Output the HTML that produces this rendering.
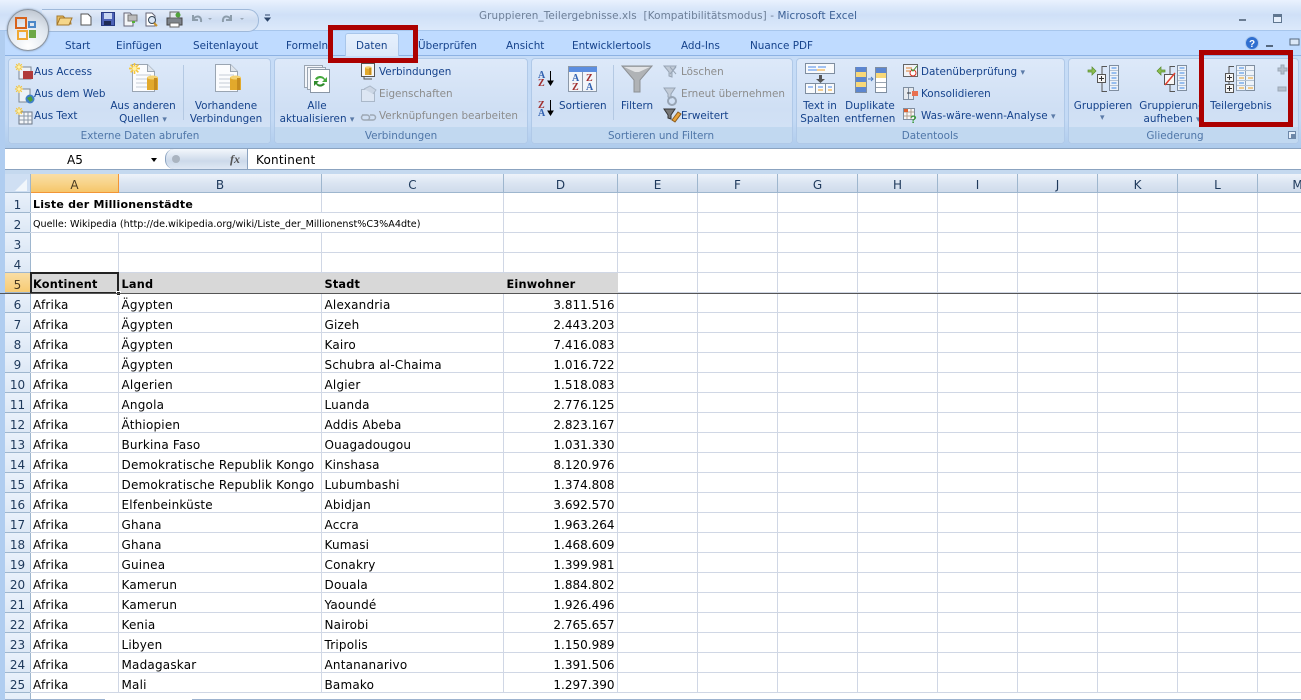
<!DOCTYPE html>
<html><head><meta charset="utf-8"><style>
html,body{margin:0;padding:0;width:1301px;height:700px;overflow:hidden;background:#fff}
body{position:relative;font-family:"DejaVu Sans","Liberation Sans",sans-serif}
.a{position:absolute}
.t{position:absolute;white-space:nowrap;font-size:10.4px;line-height:13px;color:#15428b}
.c{text-align:center;transform:translateX(-50%)}
.g{color:#8c8c8c}
.d{font-size:9px;color:#5b7ba8}
.tab{position:absolute;top:39px;white-space:nowrap;font-size:10.4px;line-height:14px;color:#15428b}
.grp{position:absolute;top:58px;height:84px;border:1px solid #b0c9e8;border-radius:4px;background:linear-gradient(#dde9f9,#cfdff4 60%,#d4e3f6 82px);overflow:hidden;box-sizing:content-box}
.grp i{position:absolute;left:0;right:0;bottom:0;height:16px;background:#c1d8f0;display:block}
.lab{position:absolute;top:130px;white-space:nowrap;font-size:10.4px;line-height:13px;color:#4f76a8;transform:translateX(-50%)}
.red{position:absolute;border:5px solid #ac0000;box-sizing:border-box}
table{position:absolute;left:30px;top:193px;border-collapse:collapse;table-layout:fixed;width:1307px;font-size:12px;letter-spacing:.2px;color:#000}
td{height:14px;padding:5px 2px 0 3px;border-right:1px solid #d0d7e5;border-bottom:1px solid #d0d7e5;white-space:nowrap;overflow:hidden;line-height:14px;box-sizing:content-box}
td.n{text-align:right;padding-right:2px;letter-spacing:0}
tr.h td{background:#d8d8d8;font-weight:bold;font-size:11.3px;border-right-color:#d8d8d8;border-bottom-color:#d8d8d8}
tr.h td.e{background:#fff;border-right-color:#d0d7e5;border-bottom-color:#d0d7e5}
.rh{position:absolute;left:5px;width:25px;height:19px;border-bottom:1px solid #9eb6ce;border-right:1px solid #9eb6ce;background:linear-gradient(#e9f1fb,#dde8f5);font-size:12px;line-height:24px;overflow:hidden;text-align:center;color:#1e395b}
.ch{position:absolute;top:174px;height:18px;border-right:1px solid #9eb6ce;border-bottom:1px solid #9eb6ce;background:linear-gradient(#eef3fa,#dbe5f2 50%,#cfdbeb);font-size:12px;line-height:22px;text-align:center;color:#1e395b}
</style></head><body>
<!-- frame -->
<div class="a" style="left:0;top:0;width:1301px;height:30px;background:linear-gradient(#eaf2fe,#dbe8fa 25%,#cfe0f7 50%,#dce9fb)"></div>
<div class="a" style="left:0;top:30px;width:1301px;height:1px;background:#a7c6ec"></div>
<div class="a" style="left:0;top:31px;width:1301px;height:24px;background:#bfdbff"></div>
<div class="a" style="left:0;top:55px;width:1301px;height:93px;background:linear-gradient(#c6dcf7,#c4daf5 70%,#aecbec)"></div>
<div class="a" style="left:0;top:55px;width:1301px;height:1px;background:#8db2e3"></div>
<div class="a" style="left:0;top:31px;width:5px;height:669px;background:#b0cdf0"></div>
<!-- QAT -->
<div class="a" style="left:42px;top:9px;width:216px;height:21px;border:1px solid #9fb9da;border-left:0;border-radius:0 11px 11px 0;background:linear-gradient(#e3ecf9,#cddcf1 50%,#dde8f7)"></div>
<div class="a" style="left:7px;top:9px;width:40px;height:40px;border-radius:50%;background:radial-gradient(circle at 50% 90%,#ffffff,#dfe6ee 55%,#b5bdc8 100%);border:1px solid #8b949f;box-shadow:0 0 2px #7f93ad"></div>
<svg class="a" style="left:0;top:0" width="300" height="60">
<g fill="none" stroke-width="2"><rect x="16" y="18" width="10" height="10" stroke="#d8631c"/><rect x="18" y="31" width="9" height="8" stroke="#f0a832"/><rect x="29" y="22" width="6" height="5" stroke="#4d88c8"/><rect x="30" y="31" width="5" height="6" fill="#6da847" stroke="#6da847"/></g>
<path d="M57 24V16h6l2 2h5l1 6z" fill="#e9bf62" stroke="#a5782c"/><path d="M57 25l3-7h12l-3 7z" fill="#f5d68a" stroke="#a5782c"/>
<path d="M81 14h7l3 3v8H81z" fill="#fff" stroke="#555"/>
<rect x="101.500" y="12.500" width="13" height="13" fill="#4d62b6" stroke="#273a84"/><rect x="104" y="13" width="8" height="6" fill="#c8d6f2"/><rect x="104" y="21" width="7" height="4" fill="#1e2a55"/>
<path d="M124 13h6l3 3v10h-9z" fill="#f4f6f8" stroke="#667"/><rect x="128" y="15" width="9" height="6" fill="#bbb" stroke="#777"/><rect x="132" y="21" width="3" height="2" fill="#53b033"/>
<path d="M146 13h6l3 3v10h-9z" fill="#fff" stroke="#667"/><circle cx="152" cy="20" r="3.500" fill="#dbe7f6" stroke="#345"/><path d="M154 23l3 3" stroke="#c8922c" stroke-width="2"/>
<rect x="167" y="18" width="15" height="7" fill="#7f858c" stroke="#444"/><rect x="170" y="12" width="9" height="6" fill="#e4e8ee" stroke="#666"/><rect x="170" y="23" width="9" height="4" fill="#fff" stroke="#666"/><circle cx="178" cy="15" r="2.500" fill="#51a33a"/>
<path d="M193 15v5h5M193 20c2-5 9-5 8 2" fill="none" stroke="#8d9dab" stroke-width="2"/><path d="M208 18l2 2 2-2z" fill="#9aa7b6"/>
<path d="M231 15v5h-5M231 20c-2-5-9-5-8 2" fill="none" stroke="#8d9dab" stroke-width="2"/><path d="M240 18l2 2 2-2z" fill="#9aa7b6"/>
<path d="M265 15h5M265 18l2.500 3 2.500-3z" fill="#2b4468" stroke="#2b4468"/>
</svg>
<!-- title -->
<div class="t" style="left:479px;top:10px;color:#6d7f97;font-size:10.4px;letter-spacing:.1px">Gruppieren_Teilergebnisse.xls&nbsp; [Kompatibilitätsmodus] -&nbsp;<span style="color:#3a5f94">Microsoft Excel</span></div>
<div class="a" style="left:1239px;top:19px;width:7px;height:2px;background:#6b7d93"></div>
<div class="a" style="left:1273px;top:14px;width:7px;height:5px;border:1px solid #5f7690;border-top:3px solid #5f7690;background:#e6effb"></div>
<!-- tabs -->
<div class="a" style="left:345px;top:33px;width:54px;height:23px;box-sizing:border-box;border:1px solid #a9c6ea;border-bottom:0;border-radius:3px 3px 0 0;background:linear-gradient(#e6f0fd,#dbe8f9)"></div>
<div class="tab" style="left:65px">Start</div>
<div class="tab" style="left:116px">Einfügen</div>
<div class="tab" style="left:193px">Seitenlayout</div>
<div class="tab" style="left:286px">Formeln</div>
<div class="tab" style="left:356px">Daten</div>
<div class="tab" style="left:418px">Überprüfen</div>
<div class="tab" style="left:506px">Ansicht</div>
<div class="tab" style="left:572px">Entwicklertools</div>
<div class="tab" style="left:681px">Add-Ins</div>
<div class="tab" style="left:750px">Nuance PDF</div>
<svg class="a" style="left:1240px;top:34px" width="61" height="20"><circle cx="12" cy="9" r="6.500" fill="#2f6fd0" stroke="#a9c7ee"/><text x="9" y="13" font-size="10" font-weight="bold" fill="#fff" font-family="Liberation Sans">?</text><rect x="26" y="11" width="7" height="2" fill="#54677e"/><rect x="50" y="5" width="9" height="6" fill="#dce8f7" stroke="#54677e"/></svg>
<!-- groups -->
<div class="grp" style="left:8px;width:261px"><i></i></div>
<div class="grp" style="left:274px;width:252px"><i></i></div>
<div class="grp" style="left:531px;width:260px"><i></i></div>
<div class="grp" style="left:796px;width:267px"><i></i></div>
<div class="grp" style="left:1068px;width:229px"><i></i></div>
<div class="lab" style="left:140px">Externe Daten abrufen</div>
<div class="lab" style="left:401px">Verbindungen</div>
<div class="lab" style="left:661px">Sortieren und Filtern</div>
<div class="lab" style="left:930px">Datentools</div>
<div class="lab" style="left:1175px">Gliederung</div>
<!-- ribbon text -->
<div class="t" style="left:34px;top:66px">Aus Access</div>
<div class="t" style="left:34px;top:88px">Aus dem Web</div>
<div class="t" style="left:34px;top:110px">Aus Text</div>
<div class="t c" style="left:143px;top:100px;line-height:13px">Aus anderen<br>Quellen <span class="d">▾</span></div>
<div class="t c" style="left:226px;top:100px">Vorhandene<br>Verbindungen</div>
<div class="t c" style="left:317px;top:100px">Alle<br>aktualisieren <span class="d">▾</span></div>
<div class="t" style="left:379px;top:66px">Verbindungen</div>
<div class="t g" style="left:379px;top:88px">Eigenschaften</div>
<div class="t g" style="left:379px;top:110px">Verknüpfungen bearbeiten</div>
<div class="t" style="left:559px;top:100px">Sortieren</div>
<div class="t" style="left:621px;top:100px">Filtern</div>
<div class="t g" style="left:681px;top:66px">Löschen</div>
<div class="t g" style="left:681px;top:88px">Erneut übernehmen</div>
<div class="t" style="left:681px;top:110px">Erweitert</div>
<div class="t c" style="left:820px;top:100px">Text in<br>Spalten</div>
<div class="t c" style="left:870px;top:100px">Duplikate<br>entfernen</div>
<div class="t" style="left:921px;top:66px">Datenüberprüfung <span class="d">▾</span></div>
<div class="t" style="left:921px;top:88px">Konsolidieren</div>
<div class="t" style="left:921px;top:110px">Was-wäre-wenn-Analyse <span class="d">▾</span></div>
<div class="t c" style="left:1103px;top:100px">Gruppieren</div>
<div class="t d" style="left:1100px;top:112px">▾</div>
<div class="t c" style="left:1172px;top:100px">Gruppierung<br>aufheben <span class="d">▾</span></div>
<div class="t c" style="left:1241px;top:100px">Teilergebnis</div>
<!-- ribbon icons -->
<svg class="a" style="left:0;top:55px" width="1301" height="90">
<defs>
<g id="star"><path d="M0 5h10M5 0v10M1.500 1.500l7 7M8.500 1.500l-7 7" stroke="#f5c63c" stroke-width="1.500"/><circle cx="5" cy="5" r="2" fill="#fff2a8"/></g>
<g id="doc"><path d="M.5.5h15l7 7v20H.5z" fill="#fbfcfe" stroke="#9aa5b2"/><path d="M15.500.5v7h7" fill="#dfe5ec" stroke="#9aa5b2"/><path d="M4 11h15M4 15h15M4 19h15M4 23h15" stroke="#c4ccd6"/></g>
<g id="cyl"><rect x="0" y="2" width="11" height="13" fill="#e2a92c"/><ellipse cx="5.500" cy="2.500" rx="5.500" ry="2" fill="#f4d272"/><rect x="7" y="3" width="3" height="12" fill="#c68c1e"/></g>
<g id="tbl"><rect x=".5" y=".5" width="9" height="25" fill="#eef3f9" stroke="#7f8ea0"/><path d="M1 5.500h8M1 10.500h8M1 15.500h8M1 20.500h8" stroke="#b4c2d3"/><path d="M2.500 3h5M2.500 8h5M2.500 13h5M2.500 18h5M2.500 23h5" stroke="#3f88e8"/></g>
<g id="plus"><rect x=".5" y=".5" width="8" height="8" fill="#f5f5f5" stroke="#555"/><path d="M2 4.500h5M4.500 2v5" stroke="#333"/></g>
</defs>
<g transform="translate(15,8)"><rect x="4" y="4" width="12" height="12" fill="#eef2f7" stroke="#7c8794"/><rect x="8" y="8" width="10" height="8" fill="#b03a3a"/><use href="#star" transform="scale(.8)"/></g>
<g transform="translate(15,30)"><rect x="4" y="4" width="11" height="13" fill="#eef2f7" stroke="#7c8794"/><circle cx="15" cy="14" r="4.500" fill="#3f7fc8"/><path d="M12 13l4-2 2 4-3 2z" fill="#4fa03a"/><use href="#star" transform="scale(.8)"/></g>
<g transform="translate(15,52)"><rect x="4" y="5" width="13" height="12" fill="#f4f6f9" stroke="#6b7787"/><path d="M4 9h13M4 13h13M9 5v12M13 5v12" stroke="#8b98a8"/><use href="#star" transform="scale(.8)"/></g>
<g transform="translate(132,9)"><use href="#doc"/><use href="#cyl" transform="translate(15,11)"/></g>
<use href="#star" transform="translate(129,8) scale(1.1)"/>
<rect x="183" y="10" width="1" height="55" fill="#b4c9e3"/>
<g transform="translate(215,9)"><use href="#doc"/><use href="#cyl" transform="translate(15,11)"/></g>
<g transform="translate(304,10)"><rect x=".5" y=".5" width="18" height="22" fill="#f4f6fa" stroke="#9aa5b2"/><rect x="3.500" y="2.500" width="18" height="22" fill="#f4f6fa" stroke="#9aa5b2"/><rect x="6.500" y="4.500" width="19" height="23" fill="#fff" stroke="#8a97a6"/><path d="M11 14c2-4 8-4 10 0l2-2v5h-5l2-2c-2-3-6-2-7 0z" fill="#45a83c"/><path d="M21 19c-2 3-7 4-9 0l-2 2v-5h5l-2 2c1 2 5 2 6 0z" fill="#2e8a2c"/></g>
<g transform="translate(361,8)"><rect x=".5" y=".5" width="13" height="13" fill="#f7f7f7" stroke="#555"/><path d="M3 13v3h8" stroke="#555" fill="none"/><use href="#cyl" transform="translate(4,3) scale(.6)"/></g>
<g transform="translate(361,31)" opacity=".55"><rect x=".5" y="3.500" width="13" height="12" fill="#e6ebf2" stroke="#8b97a6"/><path d="M3 3l6-3 6 4-3 4" fill="#c5cdd8" stroke="#8b97a6"/></g>
<path d="M362 60h5a2 2 0 010 5h-3a2 2 0 010-5M370 60h3a2 2 0 010 5h-5" fill="none" stroke="#9ea8b4" stroke-width="1.500"/>
<text x="538" y="23" font-size="10" font-weight="bold" font-family="Liberation Serif" fill="#3060b0">A</text><text x="538" y="31" font-size="10" font-weight="bold" font-family="Liberation Serif" fill="#a03030">Z</text><path d="M550.500 16v13M548 26l2.500 4 2.500-4z" stroke="#000" fill="#000"/>
<text x="538" y="53" font-size="10" font-weight="bold" font-family="Liberation Serif" fill="#a03030">Z</text><text x="538" y="61" font-size="10" font-weight="bold" font-family="Liberation Serif" fill="#3060b0">A</text><path d="M550.500 45v14M548 56l2.500 4 2.500-4z" stroke="#000" fill="#000"/>
<rect x="568.500" y="11.500" width="28" height="25" fill="#f2f5f9" stroke="#8b98a8"/><rect x="569" y="12" width="28" height="5" fill="#5c8ee0"/><path d="M582.500 17v19" stroke="#8b98a8"/>
<text x="572" y="26" font-size="10" font-weight="bold" font-family="Liberation Serif" fill="#3060b0">A</text><text x="572" y="35" font-size="10" font-weight="bold" font-family="Liberation Serif" fill="#a03030">Z</text><text x="586" y="26" font-size="10" font-weight="bold" font-family="Liberation Serif" fill="#a03030">Z</text><text x="586" y="35" font-size="10" font-weight="bold" font-family="Liberation Serif" fill="#3060b0">A</text>
<rect x="613" y="10" width="1" height="55" fill="#b4c9e3"/>
<path d="M622 11h30l-12 14v12h-6V25z" fill="#b0b3b6" stroke="#8d9094"/><path d="M624 12h26l-11 5h-4z" fill="#e2e3e5"/>
<path d="M664 11h12l-4 6v5l-3-1v-4z" fill="#c1cad6" stroke="#98a5b5"/><path d="M670 12l6 7M676 12l-6 7" stroke="#98a5b5"/>
<path d="M664 33h11l-4 6v4l-3-1v-3z" fill="#c1cad6" stroke="#98a5b5"/><circle cx="672" cy="46" r="4" fill="none" stroke="#98a5b5" stroke-width="2"/>
<path d="M664 54h11l-4 6v4l-3-1v-3z" fill="#777" stroke="#333"/><path d="M672 65l6-8 3 2-6 8z" fill="#e8a33a" stroke="#8a5a1c"/>
<rect x="805.500" y="8.500" width="29" height="10" fill="#f8fafc" stroke="#7f8ea0"/><path d="M808 12h8M818 12h8M808 15h12" stroke="#4c8ae8"/><path d="M817 15h8" stroke="#f0a020"/>
<path d="M819 20h3v4h3l-4.500 4-4.500-4h3z" fill="#555"/>
<rect x="805.500" y="28.500" width="29" height="10" fill="#f8fafc" stroke="#7f8ea0"/><path d="M815.500 28v10M825.500 28v10" stroke="#7f8ea0"/><path d="M808 32h5M818 32h5M828 32h4" stroke="#4c8ae8"/><path d="M818 35h5M828 35h4" stroke="#f0a020"/>
<rect x="855.500" y="12.500" width="11" height="25" fill="#f8d878" stroke="#7f8ea0"/><path d="M856 12h10v5h-10zM856 22h10v5h-10zM856 32h10v5h-10z" fill="#5c86d0"/>
<path d="M868 24h5M871 22l2 2-2 2" stroke="#4a7cc0" fill="none"/>
<rect x="875.500" y="12.500" width="11" height="25" fill="#fff" stroke="#7f8ea0"/><rect x="876" y="13" width="10" height="5" fill="#5c86d0"/><rect x="876" y="18" width="10" height="5" fill="#f8d878"/><path d="M876 27.500h10M876 32.500h10" stroke="#9aa5b2"/>
<rect x="903.500" y="9.500" width="14" height="12" fill="#f2f4f7" stroke="#666"/><path d="M906 13h6M906 16h4" stroke="#e08030"/><circle cx="913" cy="18" r="3" fill="#fff" stroke="#d83020"/><path d="M911 14l2 2 4-5" stroke="#409030" fill="none"/>
<rect x="903.500" y="32.500" width="10" height="12" fill="#e6eaef" stroke="#7f8ea0"/><path d="M908.500 32v12" stroke="#7f8ea0"/><rect x="912" y="36" width="6" height="5" fill="#e87050"/><path d="M907 38h4" stroke="#333"/>
<rect x="903.500" y="53.500" width="11" height="11" fill="#f7f7f7" stroke="#7f8ea0"/><path d="M907 54v10M911 54v10M904 57h10M904 61h10" stroke="#b4a090"/><rect x="904" y="54" width="4" height="3" fill="#e06030"/><text x="910" y="68" font-size="11" font-weight="bold" font-family="Liberation Sans" fill="#3a9a3a">?</text>
<path d="M1089 15h4v-3l4 4-4 4v-3h-4z" fill="#8cc050" stroke="#5a8a30" stroke-width=".7" transform="translate(-1,0)"/>
<path d="M1107 11.500h-5v25h5" fill="none" stroke="#555"/>
<use href="#tbl" transform="translate(1109,10)"/>
<use href="#plus" transform="translate(1097,19)"/>
<path d="M1165 15h-4v-3l-4 4 4 4v-3h4z" fill="#8cc050" stroke="#5a8a30" stroke-width=".7"/>
<path d="M1175 11.500h-5v25h5" fill="none" stroke="#555"/>
<use href="#tbl" transform="translate(1177,10)"/>
<rect x="1164.500" y="19.500" width="10" height="10" fill="#f7f7f7" stroke="#555"/><path d="M1165 30l10-12" stroke="#e04030" stroke-width="1.500"/>
<path d="M1234 11.500h-5v25h5" fill="none" stroke="#555"/>
<rect x="1236.500" y="10.500" width="18" height="25" fill="#eef3f9" stroke="#7f8ea0"/><rect x="1236.500" y="10.500" width="9" height="25" fill="none" stroke="#8fa0b4"/><path d="M1237 15.500h17M1237 20.500h17M1237 25.500h17M1237 30.500h17" stroke="#b4c2d3"/><path d="M1239 13h5M1239 18h5M1239 28h5" stroke="#3f88e8"/><path d="M1239 23h5M1248 23h5M1239 33h5M1248 33h5" stroke="#f0a020"/>
<use href="#plus" transform="translate(1225,18)"/><use href="#plus" transform="translate(1225,29)"/>
<path d="M1278 13h3v-3h3v3h3v3h-3v3h-3v-3h-3z" fill="#b4bfcc" stroke="#9aa7b6"/><rect x="1278" y="32" width="8" height="4" fill="#b4bfcc" stroke="#9aa7b6"/>
<path d="M1288 10h3M1288 22h3M1288 30h3M1288 44h3" stroke="#8a97a6"/>
<rect x="1288.500" y="76.500" width="7" height="7" fill="#e6effa" stroke="#6d87a8"/><rect x="1291" y="79" width="4" height="4" fill="#6d87a8"/>
</svg>
<!-- formula bar -->
<div class="a" style="left:5px;top:148px;width:1296px;height:22px;background:#fff;border-top:1px solid #8ba3c0;border-bottom:1px solid #8ba3c0;box-sizing:border-box"></div>
<div class="a" style="left:5px;top:170px;width:1296px;height:4px;background:#c5d9ef"></div>
<div class="a" style="left:67px;top:153px;font-size:12px;line-height:14px;color:#000">A5</div>
<div class="a" style="left:151px;top:158px;width:0;height:0;border:3.500px solid transparent;border-top:4px solid #000;border-bottom:0"></div>
<div class="a" style="left:165px;top:149px;width:83px;height:20px;box-sizing:border-box;border-left:1px solid #8ba3c0;border-right:1px solid #8ba3c0;border-radius:9px 0 0 9px;background:linear-gradient(#f3f7fc,#ccd9ea 60%,#dfe8f4)"></div>
<div class="a" style="left:172px;top:155px;width:8px;height:8px;border-radius:50%;background:#aab4c0"></div>
<div class="a" style="left:230px;top:151px;font:italic bold 12px/16px 'Liberation Serif',serif;color:#555">fx</div>
<div class="a" style="left:256px;top:153px;font-size:12px;line-height:14px;letter-spacing:.2px;color:#000">Kontinent</div>
<!-- headers -->
<div class="a" style="left:5px;top:174px;width:26px;height:19px;background:#cfdff3;border-right:1px solid #9eb6ce;border-bottom:1px solid #9eb6ce;box-sizing:border-box"></div>
<svg class="a" style="left:14px;top:178px" width="14" height="14"><path d="M13 1v12H1z" fill="#f1f6fb"/></svg>
<div class="ch" style="left:31px;width:87px;background:linear-gradient(#f9dea5,#f8d48a 50%,#f6c66a);border-bottom:1px solid #f29536;border-right:1px solid #f29536;color:#4a3a20">A</div>
<div class="ch" style="left:119px;width:202px">B</div>
<div class="ch" style="left:322px;width:181px">C</div>
<div class="ch" style="left:504px;width:113px">D</div>
<div class="ch" style="left:618px;width:79px">E</div>
<div class="ch" style="left:698px;width:79px">F</div>
<div class="ch" style="left:778px;width:79px">G</div>
<div class="ch" style="left:858px;width:79px">H</div>
<div class="ch" style="left:938px;width:79px">I</div>
<div class="ch" style="left:1018px;width:79px">J</div>
<div class="ch" style="left:1098px;width:79px">K</div>
<div class="ch" style="left:1178px;width:79px">L</div>
<div class="ch" style="left:1258px;width:79px">M</div>
<!-- row heads -->
<div class="rh" style="top:193px">1</div><div class="rh" style="top:213px">2</div><div class="rh" style="top:233px">3</div><div class="rh" style="top:253px">4</div>
<div class="rh" style="top:273px;background:linear-gradient(#f9dea5,#f7cb72);border-right:1px solid #f29536;color:#4a3a20">5</div>
<div class="rh" style="top:293px">6</div><div class="rh" style="top:313px">7</div><div class="rh" style="top:333px">8</div><div class="rh" style="top:353px">9</div><div class="rh" style="top:373px">10</div><div class="rh" style="top:393px">11</div><div class="rh" style="top:413px">12</div><div class="rh" style="top:433px">13</div><div class="rh" style="top:453px">14</div><div class="rh" style="top:473px">15</div><div class="rh" style="top:493px">16</div><div class="rh" style="top:513px">17</div><div class="rh" style="top:533px">18</div><div class="rh" style="top:553px">19</div><div class="rh" style="top:573px">20</div><div class="rh" style="top:593px">21</div><div class="rh" style="top:613px">22</div><div class="rh" style="top:633px">23</div><div class="rh" style="top:653px">24</div><div class="rh" style="top:673px">25</div><div class="rh" style="top:693px"></div>
<table>
<colgroup><col style="width:88px"><col style="width:203px"><col style="width:182px"><col style="width:114px"><col style="width:80px"><col style="width:80px"><col style="width:80px"><col style="width:80px"><col style="width:80px"><col style="width:80px"><col style="width:80px"><col style="width:80px"><col style="width:80px"></colgroup>
<tr><td colspan="2" style="font-weight:bold;font-size:11px">Liste der Millionenstädte</td><td></td><td></td><td></td><td></td><td></td><td></td><td></td><td></td><td></td><td></td><td></td></tr>
<tr><td colspan="3" style="font-size:9.6px;letter-spacing:0">Quelle: Wikipedia (http://de.wikipedia.org/wiki/Liste_der_Millionenst%C3%A4dte)</td><td></td><td></td><td></td><td></td><td></td><td></td><td></td><td></td><td></td><td></td></tr>
<tr><td></td><td></td><td></td><td></td><td></td><td></td><td></td><td></td><td></td><td></td><td></td><td></td><td></td></tr>
<tr><td></td><td></td><td></td><td></td><td></td><td></td><td></td><td></td><td></td><td></td><td></td><td></td><td></td></tr>
<tr class="h"><td>Kontinent</td><td>Land</td><td>Stadt</td><td>Einwohner</td><td class="e"></td><td class="e"></td><td class="e"></td><td class="e"></td><td class="e"></td><td class="e"></td><td class="e"></td><td class="e"></td><td class="e"></td></tr>
<tr><td>Afrika</td><td>Ägypten</td><td>Alexandria</td><td class="n">3.811.516</td><td></td><td></td><td></td><td></td><td></td><td></td><td></td><td></td><td></td></tr>
<tr><td>Afrika</td><td>Ägypten</td><td>Gizeh</td><td class="n">2.443.203</td><td></td><td></td><td></td><td></td><td></td><td></td><td></td><td></td><td></td></tr>
<tr><td>Afrika</td><td>Ägypten</td><td>Kairo</td><td class="n">7.416.083</td><td></td><td></td><td></td><td></td><td></td><td></td><td></td><td></td><td></td></tr>
<tr><td>Afrika</td><td>Ägypten</td><td>Schubra al-Chaima</td><td class="n">1.016.722</td><td></td><td></td><td></td><td></td><td></td><td></td><td></td><td></td><td></td></tr>
<tr><td>Afrika</td><td>Algerien</td><td>Algier</td><td class="n">1.518.083</td><td></td><td></td><td></td><td></td><td></td><td></td><td></td><td></td><td></td></tr>
<tr><td>Afrika</td><td>Angola</td><td>Luanda</td><td class="n">2.776.125</td><td></td><td></td><td></td><td></td><td></td><td></td><td></td><td></td><td></td></tr>
<tr><td>Afrika</td><td>Äthiopien</td><td>Addis Abeba</td><td class="n">2.823.167</td><td></td><td></td><td></td><td></td><td></td><td></td><td></td><td></td><td></td></tr>
<tr><td>Afrika</td><td>Burkina Faso</td><td>Ouagadougou</td><td class="n">1.031.330</td><td></td><td></td><td></td><td></td><td></td><td></td><td></td><td></td><td></td></tr>
<tr><td>Afrika</td><td>Demokratische Republik Kongo</td><td>Kinshasa</td><td class="n">8.120.976</td><td></td><td></td><td></td><td></td><td></td><td></td><td></td><td></td><td></td></tr>
<tr><td>Afrika</td><td>Demokratische Republik Kongo</td><td>Lubumbashi</td><td class="n">1.374.808</td><td></td><td></td><td></td><td></td><td></td><td></td><td></td><td></td><td></td></tr>
<tr><td>Afrika</td><td>Elfenbeinküste</td><td>Abidjan</td><td class="n">3.692.570</td><td></td><td></td><td></td><td></td><td></td><td></td><td></td><td></td><td></td></tr>
<tr><td>Afrika</td><td>Ghana</td><td>Accra</td><td class="n">1.963.264</td><td></td><td></td><td></td><td></td><td></td><td></td><td></td><td></td><td></td></tr>
<tr><td>Afrika</td><td>Ghana</td><td>Kumasi</td><td class="n">1.468.609</td><td></td><td></td><td></td><td></td><td></td><td></td><td></td><td></td><td></td></tr>
<tr><td>Afrika</td><td>Guinea</td><td>Conakry</td><td class="n">1.399.981</td><td></td><td></td><td></td><td></td><td></td><td></td><td></td><td></td><td></td></tr>
<tr><td>Afrika</td><td>Kamerun</td><td>Douala</td><td class="n">1.884.802</td><td></td><td></td><td></td><td></td><td></td><td></td><td></td><td></td><td></td></tr>
<tr><td>Afrika</td><td>Kamerun</td><td>Yaoundé</td><td class="n">1.926.496</td><td></td><td></td><td></td><td></td><td></td><td></td><td></td><td></td><td></td></tr>
<tr><td>Afrika</td><td>Kenia</td><td>Nairobi</td><td class="n">2.765.657</td><td></td><td></td><td></td><td></td><td></td><td></td><td></td><td></td><td></td></tr>
<tr><td>Afrika</td><td>Libyen</td><td>Tripolis</td><td class="n">1.150.989</td><td></td><td></td><td></td><td></td><td></td><td></td><td></td><td></td><td></td></tr>
<tr><td>Afrika</td><td>Madagaskar</td><td>Antananarivo</td><td class="n">1.391.506</td><td></td><td></td><td></td><td></td><td></td><td></td><td></td><td></td><td></td></tr>
<tr><td>Afrika</td><td>Mali</td><td>Bamako</td><td class="n">1.297.390</td><td></td><td></td><td></td><td></td><td></td><td></td><td></td><td></td><td></td></tr>
</table>
<!-- selection -->
<div class="a" style="left:30px;top:272px;width:89px;height:22px;box-sizing:border-box;border:2px solid #222"></div>
<div class="a" style="left:116px;top:291px;background:#222;border:1px solid #fff;box-sizing:content-box;width:3px;height:3px"></div>
<div class="a" style="left:0;top:293px;width:1301px;height:1px;background:#555"></div>
<!-- bottom scrollbar hint -->
<div class="a" style="left:31px;top:698px;width:1270px;height:2px;background:#fff"></div>
<div class="a" style="left:5px;top:699px;width:100px;height:1px;background:#9db3cf"></div>
<div class="a" style="left:192px;top:699px;width:1109px;height:1px;background:#9db3cf"></div>
<!-- red highlights -->
<div class="red" style="left:328px;top:25px;width:90px;height:38px"></div>
<div class="red" style="left:1199px;top:50px;width:94px;height:77px"></div>
</body></html>
